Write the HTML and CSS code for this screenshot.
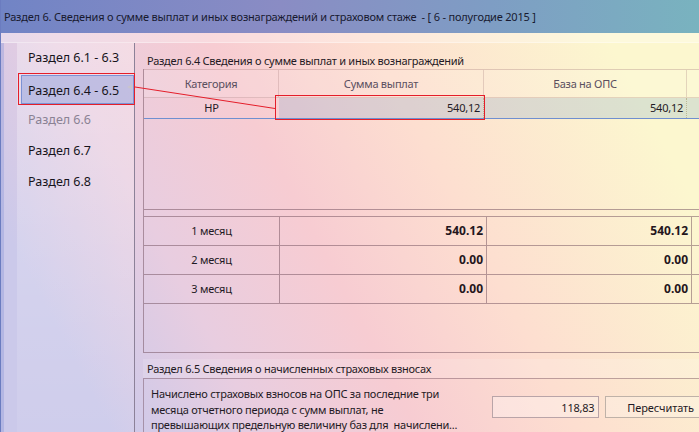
FILE: index.html
```html
<!DOCTYPE html>
<html lang="ru">
  <head>
    <meta charset="UTF-8" />
    <meta name="viewport" content="width=device-width, initial-scale=1.0" />
    <title>Раздел 6</title>
    <link rel="stylesheet" href="styles.css">
  </head>
  <body>
    <div class="window">
      <div class="titlebar">Раздел 6. Сведения о сумме выплат и иных вознаграждений и страховом стаже&nbsp; - [ 6 - полугодие 2015 ]</div>
      <div class="strip"></div>
      <div class="body">
        <nav class="nav">
          <div class="nav-item">Раздел 6.1 - 6.3</div>
          <div class="nav-item active">Раздел 6.4 - 6.5</div>
          <div class="nav-item disabled">Раздел 6.6</div>
          <div class="nav-item">Раздел 6.7</div>
          <div class="nav-item">Раздел 6.8</div>
        </nav>

        <main class="content">
          <div class="group-title">Раздел 6.4 Сведения о сумме выплат и иных вознаграждений</div>
          <div class="panel">
            <div class="grid">
              <div class="grid-row grid-head">
                <div class="cell">Категория</div>
                <div class="cell">Сумма выплат</div>
                <div class="cell">База на ОПС</div>
                <div class="cell"></div>
              </div>
              <div class="grid-row grid-data">
                <div class="cell center">НР</div>
                <div class="cell num sel">540,12</div>
                <div class="cell num sel">540,12</div>
                <div class="cell sel"></div>
              </div>
              <div class="grid-empty"></div>
            </div>

            <div class="totals">
              <div class="totals-row">
                <div class="cell center">1 месяц</div>
                <div class="cell num bold">540.12</div>
                <div class="cell num bold">540.12</div>
                <div class="cell"></div>
              </div>
              <div class="totals-row">
                <div class="cell center">2 месяц</div>
                <div class="cell num bold">0.00</div>
                <div class="cell num bold">0.00</div>
                <div class="cell"></div>
              </div>
              <div class="totals-row">
                <div class="cell center">3 месяц</div>
                <div class="cell num bold">0.00</div>
                <div class="cell num bold">0.00</div>
                <div class="cell"></div>
              </div>
            </div>
          </div>

          <div class="group-title group-title-65">Раздел 6.5 Сведения о начисленных страховых взносах</div>
          <div class="calc">
            <p class="calc-text">Начислено страховых взносов на ОПС за последние три<br>месяца отчетного периода с сумм выплат, не<br>превышающих предельную величину баз для&nbsp; начислени...</p>
            <div class="calc-field">118,83</div>
            <button class="calc-btn" type="button">Пересчитать</button>
          </div>
        </main>
      </div>

      <!-- annotation: red marks over the form -->
      <svg class="annot" width="699" height="432" viewBox="0 0 699 432">
        <polygon points="127,87 132,84.5 132,89.5" fill="#c8c4cc" />
        <rect x="18.5" y="73.5" width="116" height="31" fill="none" stroke="#e41e2a" />
        <rect x="275.5" y="95.5" width="209" height="24" fill="none" stroke="#e41e2a" />
        <line x1="135" y1="87" x2="275" y2="108.5" stroke="#e41e2a" stroke-width="1" />
      </svg>
    </div>
  </body>
</html>
```

FILE: styles.css
```css
html, body {
  margin: 0;
  padding: 0;
}

body {
  font-family: "Noto Sans", "Open Sans", sans-serif;
  font-size: 11px;
  letter-spacing: -0.25px;
  color: #1f1a24;
}

.window {
  position: relative;
  width: 699px;
  height: 432px;
  overflow: hidden;
  border-left: 1px solid #6b7cc0;
  box-sizing: border-box;
  background: linear-gradient(62deg, #cbc9ea 12%, #e8cde0 28%, #f7ccd2 45%, #fdded0 62%, #fcf7cf 88%);
}

/* Title bar */
.titlebar {
  height: 33px;
  line-height: 34px;
  padding-left: 3px;
  letter-spacing: -0.2px;
  color: #181a30;
  white-space: nowrap;
  background: linear-gradient(90deg, #7184c5 0%, #8a8cc4 40%, #7e9dc4 70%, #79b3bf 100%);
}

.strip {
  height: 10px;
  background: rgba(255, 255, 255, 0.28);
  border-bottom: 1px solid rgba(255, 255, 255, 0.35);
  box-sizing: border-box;
}

.body {
  display: flex;
  height: 389px;
  border-left: 3px solid rgba(150, 160, 220, 0.45);
}

/* Left navigation */
.nav {
  width: 118px;
  margin-left: 13px;
  box-sizing: border-box;
  border-right: 1px solid #8c8198;
  background: linear-gradient(180deg, rgba(255, 255, 255, 0.3), rgba(255, 255, 255, 0.08));
}

.nav-item {
  height: 31px;
  line-height: 30px;
  padding-left: 11px;
  font-size: 12.5px;
  letter-spacing: 0;
  color: #17141c;
  white-space: nowrap;
  box-sizing: border-box;
}

.nav-item.active {
  margin: 1px 0 1px 4px;
  height: 29px;
  padding-left: 6px;
  border: 1px solid #7c92d4;
  background: rgba(135, 155, 220, 0.45);
}

.nav-item.disabled {
  color: #8a8294;
}

/* Content */
.content {
  flex: 1;
  margin-left: 8px;
  min-width: 0;
}

.group-title {
  margin-top: 9px;
  height: 17px;
  line-height: 17px;
  padding-left: 4px;
  white-space: nowrap;
}

.panel {
  height: 284px;
  box-sizing: border-box;
  border-left: 1px solid rgba(110, 75, 90, 0.5);
  border-bottom: 1px solid rgba(110, 75, 90, 0.5);
  width: 560px;
}

.grid {
  border-top: 1px solid rgba(170, 130, 130, 0.35);
  border-bottom: 1px solid rgba(110, 75, 90, 0.5);
}

.grid-row {
  display: grid;
  grid-template-columns: 135px 205px 203px 1fr;
}

.grid-head {
  height: 28px;
  border-bottom: 1px solid rgba(170, 130, 130, 0.3);
  box-sizing: border-box;
  background: rgba(255, 255, 255, 0.12);
}

.grid-head .cell {
  line-height: 27px;
  text-align: center;
  color: #5a4f5e;
  border-right: 1px solid rgba(170, 130, 130, 0.3);
}

.grid-data {
  height: 21px;
  border-bottom: 1px solid #6f8fd0;
  box-sizing: border-box;
}

.grid-data .cell {
  line-height: 20px;
  border-right: 1px dotted rgba(160, 150, 100, 0.55);
}

.grid-data .cell:first-child {
  border-right: none;
}

.cell {
  box-sizing: border-box;
  white-space: nowrap;
  overflow: hidden;
}

.center {
  text-align: center;
}

.num {
  text-align: right;
  padding-right: 3px;
}

.sel {
  background: rgba(120, 165, 210, 0.24);
}

.grid-empty {
  height: 90px;
}

.totals {
  margin-top: 6px;
  border-top: 1px solid rgba(110, 75, 90, 0.5);
}

.totals-row {
  display: grid;
  grid-template-columns: 136px 207px 205px 1fr;
  height: 29px;
  border-bottom: 1px solid rgba(110, 75, 90, 0.5);
  box-sizing: border-box;
}

.totals-row .cell {
  line-height: 28px;
  border-right: 1px solid rgba(110, 75, 90, 0.5);
}

.totals-row .cell:last-child {
  border-right: none;
}

.bold {
  font-size: 12px;
  font-weight: bold;
  letter-spacing: 0;
  color: #24161c;
}

/* Section 6.5 */
.group-title-65 {
  margin-top: 6px;
  height: 19px;
  line-height: 19px;
  background: rgba(255, 255, 255, 0.15);
}

.calc {
  display: flex;
  align-items: flex-start;
  height: 60px;
  border-top: 1px solid rgba(110, 75, 90, 0.45);
  border-left: 1px solid rgba(110, 75, 90, 0.45);
  width: 560px;
}

.calc-text {
  margin: 7px 0 0 7px;
  width: 341px;
  flex: none;
  line-height: 15.5px;
  white-space: nowrap;
}

.calc-field {
  margin-top: 17px;
  width: 109px;
  height: 22px;
  line-height: 21px;
  padding-right: 4px;
  text-align: right;
  box-sizing: border-box;
  border: 1px solid #b9a4a8;
  background: rgba(255, 255, 255, 0.3);
}

.calc-btn {
  margin: 17px 0 0 6px;
  width: 100px;
  height: 22px;
  padding: 0 0 0 21px;
  text-align: left;
  font-family: inherit;
  font-size: 11px;
  letter-spacing: -0.1px;
  color: #1f1a24;
  border: 1px solid #bfb2a8;
  background: rgba(255, 255, 255, 0.22);
}

/* Annotation overlay */
.annot {
  position: absolute;
  top: 0;
  left: -1px;
  pointer-events: none;
}
```
